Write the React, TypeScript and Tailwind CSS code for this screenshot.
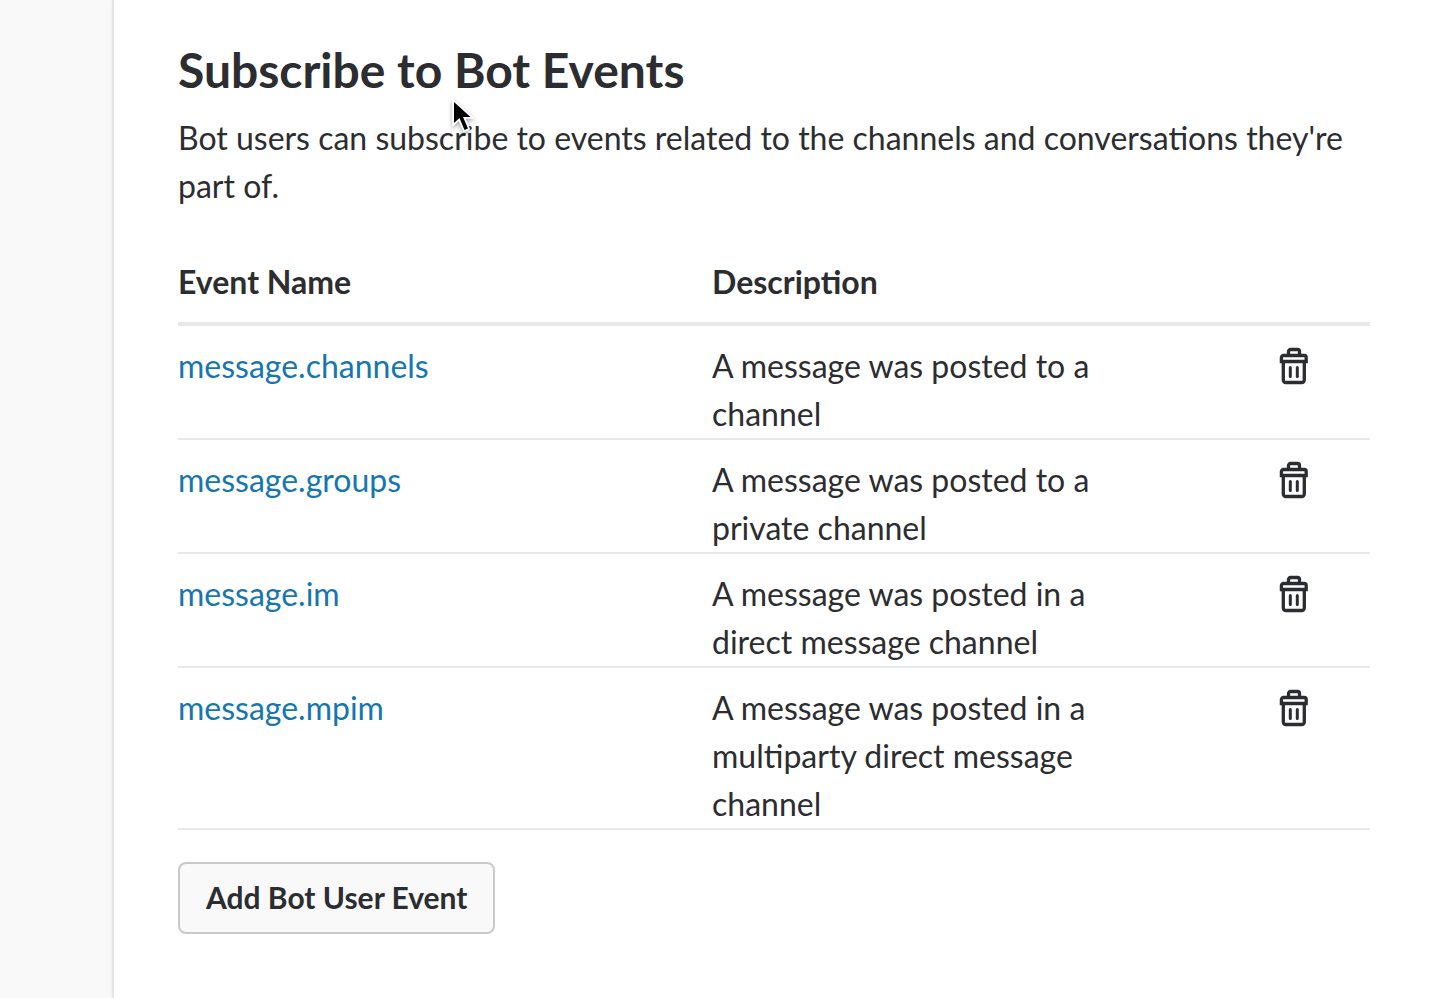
const events = [
  { name: "message.channels", description: "A message was posted to a channel" },
  { name: "message.groups", description: "A message was posted to a private channel" },
  { name: "message.im", description: "A message was posted in a direct message channel" },
  { name: "message.mpim", description: "A message was posted in a multiparty direct message channel" },
];

function TrashIcon() {
  return (
    <svg viewBox="0 0 32 40" className="block h-10 w-8" fill="none" stroke="currentColor" strokeWidth="3.3" aria-hidden="true">
      <path d="M10.500 9V5.500a2 2 0 0 1 2-2h7a2 2 0 0 1 2 2V9" />
      <path d="M3.400 15.500v-4a2 2 0 0 1 2-2h20.800a2 2 0 0 1 2 2v4z" />
      <path d="M5.300 15.500v18.500a2.500 2.500 0 0 0 2.500 2.500h16a2.500 2.500 0 0 0 2.500-2.500v-18.500" />
      <path d="M12.300 21.500v9M19.300 21.500v9" strokeWidth="3" strokeLinecap="round" />
    </svg>
  );
}

function Pointer() {
  return (
    <svg viewBox="0 0 30 42" className="pointer-events-none absolute left-[338px] top-[94px] h-[42px] w-[30px] overflow-visible drop-shadow-[0_2px_2px_rgba(0,0,0,0.35)]" aria-hidden="true">
      <path
        d="M2 8v21l5.500-5 5 12 3.500-1.500-5-11.500h7.500z"
        fill="#000"
        stroke="#fff"
        strokeWidth="3.5"
        paintOrder="stroke"
      />
    </svg>
  );
}

export default function App() {
  return (
    <div className="flex min-h-screen bg-[#f9f9f9] font-['Lato',sans-serif] text-[32px] leading-[48px] text-[#2c2d30]">
      <aside className="w-28 shrink-0" />
      <main className="relative min-w-0 flex-1 border-l-2 border-[#e5e5e5] bg-white pt-[38px] pr-[60px] pb-16 pl-16 shadow-[0_0_3px_rgba(0,0,0,0.08)]">
        <h1 className="text-[48px] leading-[64px] font-bold">Subscribe to Bot Events</h1>
        <Pointer />
        <p className="mt-3">Bot users can subscribe to events related to the channels and conversations they're part of.</p>
        <table className="mt-12 w-full table-fixed border-collapse text-left">
          <thead>
            <tr className="border-b-4 border-[#e8e8e8]">
              <th className="w-[534px] pb-4 font-bold">Event Name</th>
              <th className="pb-4 font-bold">Description</th>
              <th className="w-[240px]" aria-label="Actions" />
            </tr>
          </thead>
          <tbody>
            {events.map((event) => (
              <tr key={event.name} className="border-b-2 border-[#e8e8e8] align-top">
                <td className="pt-4">
                  <a href={"#" + event.name} className="text-[#1576b0]">{event.name}</a>
                </td>
                <td className="pt-4">{event.description}</td>
                <td className="pt-5 pr-[60px]">
                  <button type="button" aria-label={"Delete " + event.name} className="ml-auto block">
                    <TrashIcon />
                  </button>
                </td>
              </tr>
            ))}
          </tbody>
        </table>
        <button type="button" className="mt-8 h-[72px] rounded-lg border-2 border-[#c7cacd] bg-[#f9f9f9] px-[26px] pb-[2px] text-[30px] leading-10 font-bold">
          Add Bot User Event
        </button>
      </main>
    </div>
  );
}
